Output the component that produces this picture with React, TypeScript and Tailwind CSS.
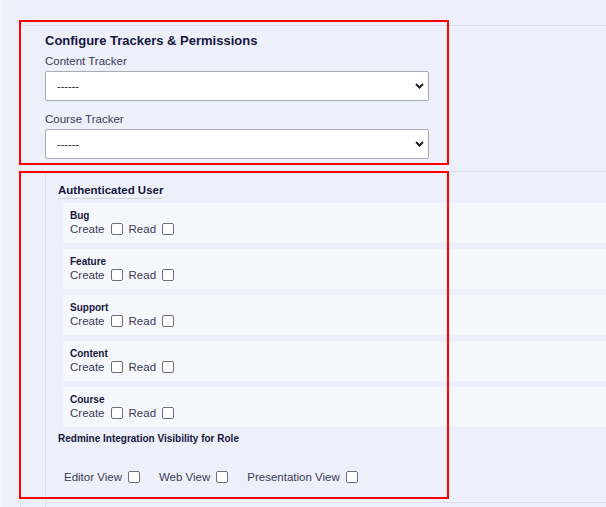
import { useState } from "react";

const trackers = ["Bug", "Feature", "Support", "Content", "Course"];

function Box() {
  return (
    <input
      type="checkbox"
      className="m-0 h-[12px] w-[12px] shrink-0 appearance-none rounded-[2px] border border-[#6f6f7a] bg-white"
    />
  );
}

function FakeSelect() {
  return (
    <div className="relative h-[30px] w-[384px]">
      <select className="h-full w-full appearance-none rounded-[2px] border border-[#a9a9b0] bg-white pl-[11px] text-[11px] text-[#222]">
        <option>------</option>
      </select>
      <svg
        className="pointer-events-none absolute right-[5px] top-[12px]"
        width="9"
        height="6"
        viewBox="0 0 9 6"
      >
        <path d="M1 1l3.5 3.5L8 1" fill="none" stroke="#222" strokeWidth="2" />
      </svg>
    </div>
  );
}

export default function App() {
  const [roles] = useState(["Editor View", "Web View", "Presentation View"]);

  return (
    <div
      className="relative h-[507px] w-[606px] overflow-hidden bg-[#edf0fb] text-[#3a3a55]"
      style={{ fontFamily: '"Liberation Sans", Arial, sans-serif' }}
    >
      <div className="flex h-full">
        <div className="w-[3px] shrink-0 bg-[#f3f5fc]" />
        <div className="ml-[17px] mt-[25px] flex-1 border-l border-t border-[#dcdfe9]">
          {/* tracker selects */}
          <div className="pl-[24px] pt-[7px]">
            <h2 className="text-[13px] font-bold leading-[16px] text-[#16163d]">
              Configure Trackers &amp; Permissions
            </h2>
            <p className="mt-[5px] text-[11.5px] leading-[14px]">Content Tracker</p>
            <div className="mt-[3px]">
              <FakeSelect />
            </div>
            <p className="mt-[11px] text-[11.5px] leading-[14px]">Course Tracker</p>
            <div className="mt-[3px]">
              <FakeSelect />
            </div>
          </div>

          {/* role permissions */}
          <div className="ml-[24px] mt-[12px] border-l border-t border-[#dcdfe9] pb-[18px]">
            <div className="flex pl-[12px] pt-[11px]">
              <span className="border-b border-[#d3d6e0] pb-[1px] text-[11.5px] font-bold leading-[14px] text-[#16163d]">
                Authenticated User
              </span>
            </div>
            <div className="ml-[17px] mt-[4px] flex flex-col gap-[6px]">
              {trackers.map((t) => (
                <div key={t} className="h-[40px] bg-[#f6f7fd] px-[7px] pt-[6px]">
                  <p className="text-[10px] font-bold leading-[13px] text-[#16163d]">{t}</p>
                  <div className="flex items-center gap-[6px] text-[11.5px] leading-[14px]">
                    <span>Create</span>
                    <Box />
                    <span>Read</span>
                    <Box />
                  </div>
                </div>
              ))}
            </div>
            <p className="pl-[12px] pt-[5px] text-[10px] font-bold leading-[13px] text-[#16163d]">
              Redmine Integration Visibility for Role
            </p>
            <div className="mt-[25px] flex items-center pl-[18px] text-[11.5px] leading-[14px]">
              {roles.map((r) => (
                <label key={r} className="mr-[19px] flex items-center gap-[6px]">
                  <span>{r}</span>
                  <Box />
                </label>
              ))}
            </div>
          </div>
          <div className="ml-[24px] h-[20px] border-l border-t border-[#dcdfe9]" />
        </div>
      </div>

      {/* annotation boxes */}
      <div className="pointer-events-none absolute left-[19px] top-[20px] h-[145px] w-[430px] border-2 border-[#ff0000]" />
      <div className="pointer-events-none absolute left-[19px] top-[171px] h-[328px] w-[430px] border-2 border-[#ff0000]" />
    </div>
  );
}
